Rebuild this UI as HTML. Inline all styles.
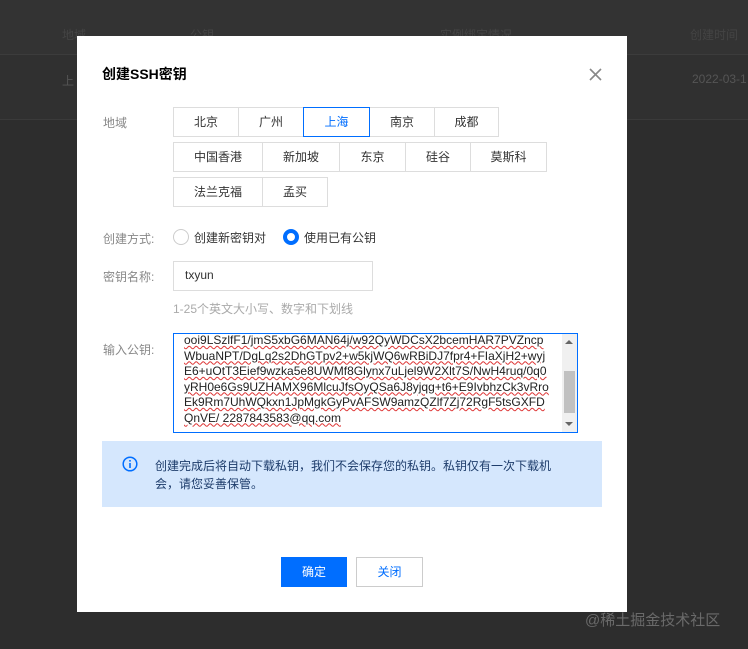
<!DOCTYPE html>
<html><head><meta charset="utf-8"><style>
*{box-sizing:border-box;margin:0;padding:0}
body{width:748px;height:649px;background:#2d2d2d;position:relative;overflow:hidden;font-family:"Liberation Sans","Noto Sans CJK SC",sans-serif;font-size:12px;color:#333}
.a{position:absolute}
.hdr{left:0;top:0;width:748px;height:55px;background:#333;border-bottom:1px solid #3c3c3c}
.row{left:0;top:55px;width:748px;height:65px;background:#303030;border-bottom:1px solid #3a3a3a}
.dlg{left:77px;top:36px;width:550px;height:576px;background:#fff}
.lbl{color:#888;font-size:12px}
.b{position:absolute;height:30px;border:1px solid #ddd;background:#fff;text-align:center;line-height:28px;color:#333;font-size:12px}
.sel{border-color:#006eff;color:#006eff;z-index:2}
.ta{position:absolute;left:10px;top:-1px;font-size:12px;line-height:15.5px;color:#222;white-space:nowrap;text-decoration:underline wavy #d33;text-decoration-thickness:1px}
</style></head><body>
<div class="a hdr"></div>
<div class="a" style="left:62px;top:26px;color:#444">地域</div>
<div class="a" style="left:190px;top:26px;color:#444">公钥</div>
<div class="a" style="left:440px;top:26px;color:#444">实例绑定情况</div>
<div class="a" style="left:690px;top:26px;color:#444">创建时间</div>
<div class="a row"></div>
<div class="a" style="left:62px;top:72px;color:#555">上</div>
<div class="a" style="left:692px;top:72px;color:#555">2022-03-1</div>
<div class="a dlg"></div>
<div class="a" style="left:102px;top:64px;font-size:14px;font-weight:bold;color:#000">创建SSH密钥</div>
<svg class="a" style="left:589px;top:68px" width="13" height="13" viewBox="0 0 13 13"><path d="M1 1L12 12M12 1L1 12" stroke="#888" stroke-width="1.6"/></svg>
<div class="a lbl" style="left:103px;top:114px">地域</div>
<div class="b" style="left:173px;top:107px;width:66px">北京</div>
<div class="b" style="left:238px;top:107px;width:66px">广州</div>
<div class="b sel" style="left:303px;top:107px;width:67px">上海</div>
<div class="b" style="left:369px;top:107px;width:66px">南京</div>
<div class="b" style="left:434px;top:107px;width:65px">成都</div>
<div class="b" style="left:173px;top:142px;width:90px">中国香港</div>
<div class="b" style="left:262px;top:142px;width:78px">新加坡</div>
<div class="b" style="left:339px;top:142px;width:67px">东京</div>
<div class="b" style="left:405px;top:142px;width:66px">硅谷</div>
<div class="b" style="left:470px;top:142px;width:77px">莫斯科</div>
<div class="b" style="left:173px;top:177px;width:90px">法兰克福</div>
<div class="b" style="left:262px;top:177px;width:66px">孟买</div>
<div class="a lbl" style="left:103px;top:230px">创建方式:</div>
<div class="a" style="left:173px;top:229px;width:16px;height:16px;border:1px solid #ccc;border-radius:50%"></div>
<div class="a" style="left:194px;top:229px">创建新密钥对</div>
<div class="a" style="left:283px;top:229px;width:16px;height:16px;border:4px solid #006eff;border-radius:50%"></div>
<div class="a" style="left:304px;top:229px">使用已有公钥</div>
<div class="a lbl" style="left:103px;top:268px">密钥名称:</div>
<div class="a" style="left:173px;top:261px;width:200px;height:30px;border:1px solid #ddd;padding:6px 11px">txyun</div>
<div class="a lbl" style="left:173px;top:300px;color:#aaa">1-25个英文大小写、数字和下划线</div>
<div class="a lbl" style="left:103px;top:341px">输入公钥:</div>
<div class="a" style="left:173px;top:333px;width:405px;height:100px;border:1px solid #006eff;overflow:hidden">
<div class="ta">ooi9LSzlfF1/jmS5xbG6MAN64j/w92QyWDCsX2bcemHAR7PVZncp<br>WbuaNPT/DgLq2s2DhGTpv2+w5kjWQ6wRBiDJ7fpr4+FIaXjH2+wyj<br>E6+uOtT3Eief9wzka5e8UWMf8Glynx7uLjel9W2Xlt7S/NwH4ruq/0q0<br>yRH0e6Gs9UZHAMX96MlcuJfsOyQSa6J8yjqg+t6+E9IvbhzCk3vRro<br>Ek9Rm7UhWQkxn1JpMgkGyPvAFSW9amzQZlf7Zj72RgF5tsGXFD<br>QnVE/ 2287843583@qq.com</div>
<div style="position:absolute;right:0;top:0;width:15px;height:98px;background:#f0f0f0"></div>
<div style="position:absolute;right:2px;top:37px;width:11px;height:42px;background:#c1c1c1"></div>
<div style="position:absolute;right:4px;top:6px;border:4px solid transparent;border-bottom:4px solid #666;border-top:0;width:0"></div>
<div style="position:absolute;right:4px;bottom:6px;border:4px solid transparent;border-top:4px solid #666;border-bottom:0;width:0"></div>
</div>
<div class="a" style="left:102px;top:441px;width:500px;height:66px;background:#d5e7fd"></div>
<svg class="a" style="left:122px;top:456px" width="16" height="16" viewBox="0 0 16 16"><circle cx="8" cy="8" r="6.8" fill="none" stroke="#006eff" stroke-width="1.5"/><rect x="7.2" y="7" width="1.6" height="5" fill="#006eff"/><rect x="7.2" y="4" width="1.6" height="1.6" fill="#006eff"/></svg>
<div class="a" style="left:155px;top:457px;width:440px;line-height:18px;color:#1c3b6a">创建完成后将自动下载私钥，我们不会保存您的私钥。私钥仅有一次下载机<br>会，请您妥善保管。</div>
<div class="a" style="left:281px;top:557px;width:66px;height:30px;background:#006eff;color:#fff;text-align:center;line-height:30px">确定</div>
<div class="a" style="left:356px;top:557px;width:67px;height:30px;border:1px solid #ccc;color:#006eff;text-align:center;line-height:28px">关闭</div>
<div class="a" style="left:585px;top:609px;font-size:15px;color:#6a6a6a">@稀土掘金技术社区</div>
</body></html>
